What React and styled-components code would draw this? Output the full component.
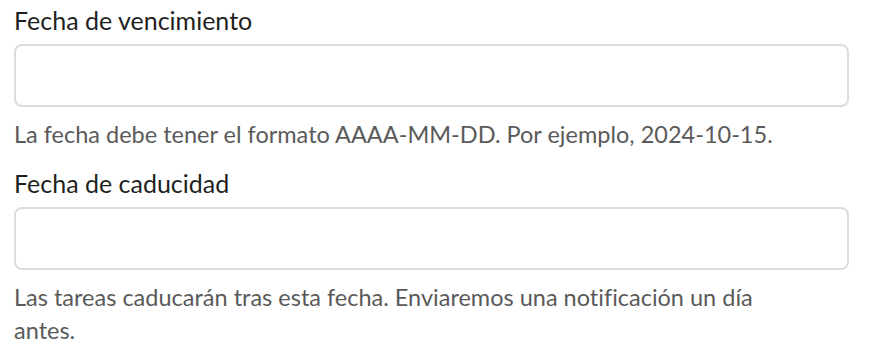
import styled, { createGlobalStyle } from 'styled-components';

const GlobalStyle = createGlobalStyle`
  body {
    margin: 0;
    background: #ffffff;
    font-family: Lato, "Liberation Sans", sans-serif;
    font-variant-ligatures: none;
  }
`;

const Form = styled.div`
  width: 835px;
  padding: 0 0 0 14px;
  display: flex;
  flex-direction: column;
`;

const Field = styled.div`
  display: flex;
  flex-direction: column;
  margin-top: ${(p) => (p.first ? '0' : '12px')};
`;

const Label = styled.label`
  font-size: 25px;
  line-height: 32px;
  color: #1f1f1f;
  padding-top: 4px;
`;

const Input = styled.input`
  box-sizing: border-box;
  width: 100%;
  height: 63px;
  margin-top: 8px;
  border: 2px solid #dcdce0;
  border-radius: 8px;
  background: #fff;
  outline: none;
  padding: 0 14px;
  font: inherit;
`;

const Help = styled.p`
  max-width: 790px;
  margin: 11px 0 0;
  font-size: 23.5px;
  line-height: 33px;
  color: #5a5a5a;
`;

const App = () => (
  <>
    <GlobalStyle />
    <Form>
      <Field first>
        <Label htmlFor="vencimiento">Fecha de vencimiento</Label>
        <Input id="vencimiento" type="text" />
        <Help>La fecha debe tener el formato AAAA-MM-DD. Por ejemplo, 2024-10-15.</Help>
      </Field>
      <Field>
        <Label htmlFor="caducidad">Fecha de caducidad</Label>
        <Input id="caducidad" type="text" />
        <Help>Las tareas caducarán tras esta fecha. Enviaremos una notificación un día antes.</Help>
      </Field>
    </Form>
  </>
);

export default App;
